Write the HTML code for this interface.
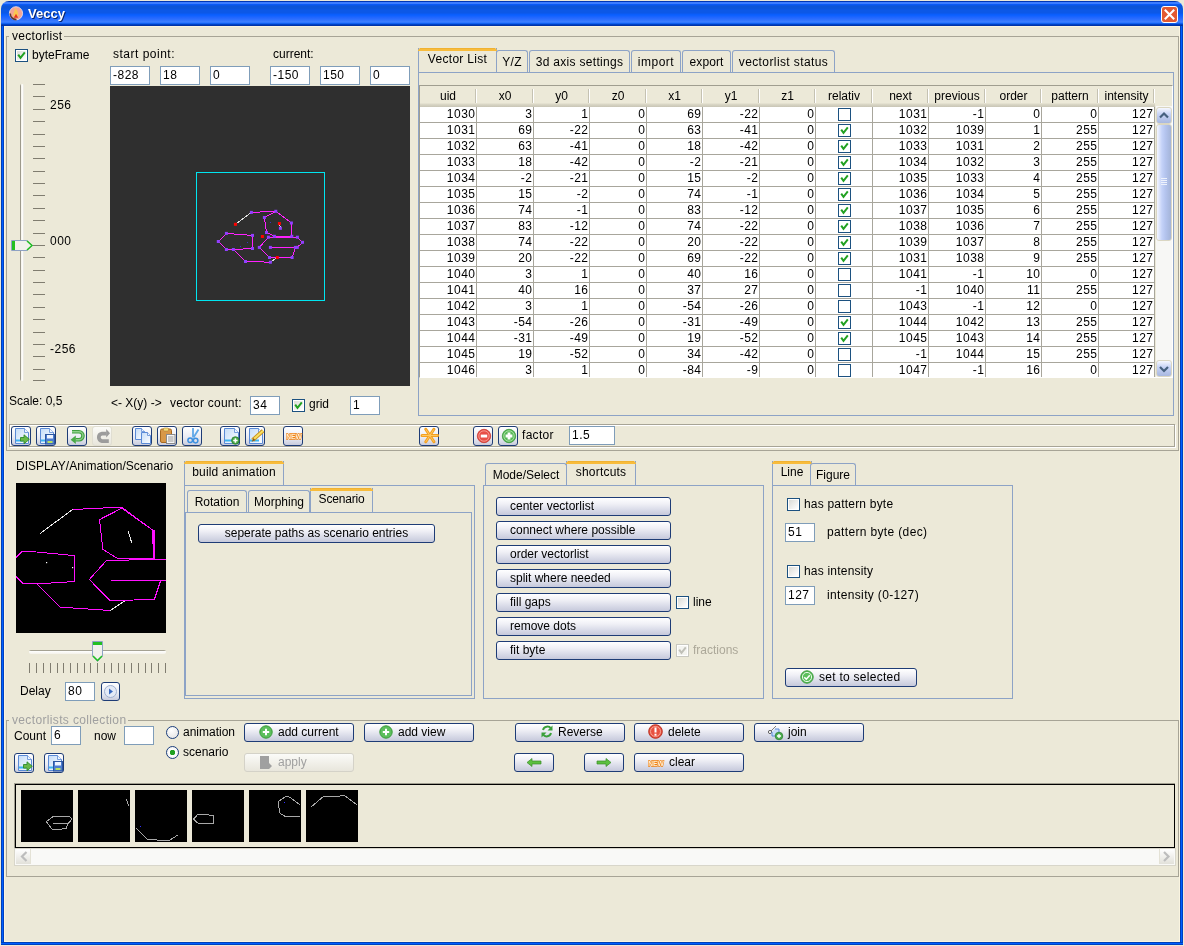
<!DOCTYPE html><html><head><meta charset="utf-8"><style>
*{margin:0;padding:0;box-sizing:border-box}
html,body{width:1184px;height:946px;overflow:hidden;background:#ECE9D8;font-family:"Liberation Sans",sans-serif;font-size:12px;color:#000}
div,span{position:absolute}
.t{white-space:nowrap;line-height:14px}
.tf{background:#fff;border:1px solid #7F9DB9;white-space:nowrap;line-height:16px;padding-left:2px;letter-spacing:0.5px}
.btn{border:1px solid #1E3C76;border-radius:3px;background:linear-gradient(#FFFFFF,#F0F0F6 35%,#D9DBE8 70%,#C6C9DB);white-space:nowrap;line-height:16px}
.cb{background:linear-gradient(135deg,#DCDCD7 10%,#FFFFFF 90%);border:1px solid #1C5180;box-shadow:inset 0 0 0 1px #fff}
.tab{border:1px solid #8DA3C6;border-bottom:none;border-radius:3px 3px 0 0;background:#ECE9D8;white-space:nowrap;text-align:center}
.tabsel{border-top:3px solid #F8B93C}
.pane{border:1px solid #8DA3C6}
.gl{background:#A7A496}
</style></head><body><div id="root" style="left:0;top:0;width:1184px;height:946px;will-change:transform;overflow:hidden">
<div style="left:0;top:0;width:1184px;height:946px;background:#ECE9D8"></div>
<div style="left:1px;top:1px;width:1182px;height:25px;border-radius:8px 8px 0 0;background:linear-gradient(#0036B5 0px,#0036B5 1px,#3C7DFF 1px,#3C7DFF 3px,#0A5EFF 3px,#0A58EE 4px,#0C55D8 5px,#0C55D8 7px,#0C58E6 9px,#0C58E6 12px,#0A5CF8 13px,#0A60FF 14px,#2468FF 17px,#3073FF 19px,#3F80FF 21px,#2070FF 22px,#0050E0 23px,#0033A8 24px,#0033A8 25px)"></div>
<div style="left:1px;top:26px;width:3px;height:919px;background:linear-gradient(90deg,#0040B8 0,#0040B8 1px,#0060FF 1px,#0060FF 2px,#0040C0 2px)"></div>
<div style="left:1180px;top:26px;width:3px;height:919px;background:linear-gradient(90deg,#0040B8 0,#0040B8 1px,#0060FF 1px,#0060FF 2px,#0040C0 2px)"></div>
<div style="left:1px;top:942px;width:1182px;height:3px;background:linear-gradient(#0040B8 0,#0040B8 1px,#0060FF 1px,#0060FF 2px,#0040C0 2px)"></div>
<div style="left:4px;top:26px;width:1176px;height:1px;background:#FAF4E0"></div>
<div style="left:4px;top:26px;width:1px;height:916px;background:#FAF4E0"></div>
<div style="left:1179px;top:26px;width:1px;height:916px;background:#FAF4E0"></div>
<div style="left:4px;top:941px;width:1176px;height:1px;background:#FAF4E0"></div>
<svg style="position:absolute;left:8px;top:5px" width="16" height="16"><circle cx="8" cy="8.3" r="6.6" fill="#F2A595" stroke="#FBEAEA" stroke-width="0.8"/><path d="M2.2 8.5A6 6 0 0 0 8.5 14.6" stroke="#5A3A30" stroke-width="1.6" fill="none"/><path d="M7.6 2.8C9 5.5 10.6 7.5 10.2 11.2L5.2 11.2C5 8.5 6.6 6.5 7.6 2.8Z" fill="#F8C850"/><path d="M5.8 12.8L8 8.8L10.2 12.8Z" fill="#E83818"/></svg>
<div class="t" style="left:28px;top:6px;font-size:13px;font-weight:bold;color:#fff;line-height:16px;text-shadow:1px 1px 0 #0A246A">Veccy</div>
<div style="left:1161px;top:6px;width:17px;height:17px;border:1px solid #fff;border-radius:3px;background:#E35A32"></div>
<svg style="position:absolute;left:1161px;top:6px" width="17" height="17"><path d="M3.8 3.8L13.2 13.2M13.2 3.8L3.8 13.2" stroke="#fff" stroke-width="2.1"/></svg>
<div style="left:6px;top:36px;width:1173px;height:415px;border:1px solid #A7A496"></div>
<div class="t" style="left:9px;top:29px;padding:0 2px 0 3px;background:#ECE9D8;color:#000;letter-spacing:0.3px">vectorlist</div>
<div class="cb" style="left:15px;top:49px;width:13px;height:13px"></div>
<svg style="position:absolute;left:15px;top:49px" width="13" height="13"><path d="M3.2 5.6L5.5 8.8L9.8 3.4" stroke="#21A121" stroke-width="2" fill="none"/></svg>
<div class="t" style="left:32px;top:48px">byteFrame</div>
<div style="left:20px;top:84px;width:4px;height:297px;border-radius:2px;background:linear-gradient(90deg,#9D9A8C 0,#9D9A8C 1px,#F4F2EA 1px,#FFFFFF 3px,#DAD7C8 4px)"></div>
<div style="left:33px;top:84px;width:12px;height:1px;background:#807D70"></div>
<div style="left:33px;top:96px;width:12px;height:1px;background:#807D70"></div>
<div style="left:33px;top:109px;width:12px;height:1px;background:#807D70"></div>
<div style="left:33px;top:121px;width:12px;height:1px;background:#807D70"></div>
<div style="left:33px;top:134px;width:12px;height:1px;background:#807D70"></div>
<div style="left:33px;top:146px;width:12px;height:1px;background:#807D70"></div>
<div style="left:33px;top:158px;width:12px;height:1px;background:#807D70"></div>
<div style="left:33px;top:171px;width:12px;height:1px;background:#807D70"></div>
<div style="left:33px;top:183px;width:12px;height:1px;background:#807D70"></div>
<div style="left:33px;top:195px;width:12px;height:1px;background:#807D70"></div>
<div style="left:33px;top:208px;width:12px;height:1px;background:#807D70"></div>
<div style="left:33px;top:220px;width:12px;height:1px;background:#807D70"></div>
<div style="left:33px;top:233px;width:12px;height:1px;background:#807D70"></div>
<div style="left:33px;top:245px;width:12px;height:1px;background:#807D70"></div>
<div style="left:33px;top:257px;width:12px;height:1px;background:#807D70"></div>
<div style="left:33px;top:270px;width:12px;height:1px;background:#807D70"></div>
<div style="left:33px;top:282px;width:12px;height:1px;background:#807D70"></div>
<div style="left:33px;top:294px;width:12px;height:1px;background:#807D70"></div>
<div style="left:33px;top:307px;width:12px;height:1px;background:#807D70"></div>
<div style="left:33px;top:319px;width:12px;height:1px;background:#807D70"></div>
<div style="left:33px;top:332px;width:12px;height:1px;background:#807D70"></div>
<div style="left:33px;top:344px;width:12px;height:1px;background:#807D70"></div>
<div style="left:33px;top:356px;width:12px;height:1px;background:#807D70"></div>
<div style="left:33px;top:369px;width:12px;height:1px;background:#807D70"></div>
<div style="left:33px;top:380px;width:12px;height:1px;background:#807D70"></div>
<div class="t" style="left:50px;top:98px;letter-spacing:0.5px">256</div>
<div class="t" style="left:50px;top:234px;letter-spacing:0.5px">000</div>
<div class="t" style="left:50px;top:342px;letter-spacing:0.5px">-256</div>
<svg style="position:absolute;left:11px;top:240px" width="23" height="12"><path d="M0.5 0.5H16L21.5 5.5L16 10.5H0.5Z" fill="#F2F1EC" stroke="#8FA2C4"/><rect x="1" y="1" width="3" height="9" fill="#22C022"/><path d="M16 1L21 5.5L16 10" stroke="#22C022" stroke-width="1.5" fill="none"/></svg>
<div class="t" style="left:9px;top:394px">Scale: 0,5</div>
<div class="t" style="left:113px;top:47px;letter-spacing:0.5px">start point:</div>
<div class="t" style="left:273px;top:47px">current:</div>
<div class="tf" style="left:110px;top:66px;width:40px;height:19px">-828</div>
<div class="tf" style="left:160px;top:66px;width:40px;height:19px">18</div>
<div class="tf" style="left:210px;top:66px;width:40px;height:19px">0</div>
<div class="tf" style="left:270px;top:66px;width:40px;height:19px">-150</div>
<div class="tf" style="left:320px;top:66px;width:40px;height:19px">150</div>
<div class="tf" style="left:370px;top:66px;width:40px;height:19px">0</div>
<svg style="position:absolute;left:110px;top:86px" width="300" height="300">
<rect width="300" height="300" fill="#2F2F2F"/>
<rect x="86.5" y="86.5" width="128" height="128" fill="none" stroke="#00E5F0" stroke-width="1"/>
<g transform="translate(-110,-86)" fill="none" stroke-width="1" shape-rendering="crispEdges">
<polyline points="235.4,224.3 251.4,212.4" stroke="#E0E0E0"/>
<polyline points="251.4,212.4 275.8,211.3 291.4,223 291.8,236.3 274.4,236.3 266.5,232.5 264.4,217.5 275.8,211.3" stroke="#FF20FF"/>
<polyline points="279.4,223.5 280.4,228.3" stroke="#E0E0E0"/>
<polyline points="226.4,233.4 252.5,235.4 252.5,248.5 233.4,249.5 226.4,249.5 218.3,241.5 226.4,233.4" stroke="#FF20FF"/>
<polyline points="233.4,249.5 245.5,261.5 270.4,262.2" stroke="#FF20FF"/>
<polyline points="270.4,262.2 277.3,257.5" stroke="#E0E0E0"/>
<polyline points="269.5,257.5 292.1,257.5 295.4,247.4 270.4,247.4" stroke="#FF20FF"/>
<polyline points="269.5,257.5 259.3,247.4 268.4,237.2 297.4,237.2 302.5,242.3 297.3,247.4 295.4,247.4" stroke="#FF20FF"/>
</g>
<g transform="translate(-110,-86)" fill="#9040FF">
<rect x="249.9" y="210.9" width="3" height="3"/><rect x="274.3" y="209.8" width="3" height="3"/><rect x="289.9" y="221.5" width="3" height="3"/><rect x="290.3" y="234.8" width="3" height="3"/><rect x="272.9" y="234.8" width="3" height="3"/><rect x="265.0" y="231.0" width="3" height="3"/><rect x="262.9" y="216.0" width="3" height="3"/><rect x="278.9" y="226.8" width="3" height="3"/><rect x="224.9" y="231.9" width="3" height="3"/><rect x="251.0" y="233.9" width="3" height="3"/><rect x="251.0" y="247.0" width="3" height="3"/><rect x="231.9" y="248.0" width="3" height="3"/><rect x="224.9" y="248.0" width="3" height="3"/><rect x="216.8" y="240.0" width="3" height="3"/><rect x="244.0" y="260.0" width="3" height="3"/><rect x="268.9" y="260.7" width="3" height="3"/><rect x="268.0" y="256.0" width="3" height="3"/><rect x="290.6" y="256.0" width="3" height="3"/><rect x="293.9" y="245.9" width="3" height="3"/><rect x="295.8" y="245.9" width="3" height="3"/><rect x="268.9" y="245.9" width="3" height="3"/><rect x="257.8" y="245.9" width="3" height="3"/><rect x="266.9" y="235.7" width="3" height="3"/><rect x="295.9" y="235.7" width="3" height="3"/><rect x="301.0" y="240.8" width="3" height="3"/>
</g>
<g transform="translate(-110,-86)" fill="#3838C0"><rect x="270" y="222" width="1" height="1"/><rect x="247" y="242" width="1" height="1"/><rect x="240" y="246" width="1" height="1"/></g>
<g transform="translate(-110,-86)" fill="#FF0000">
<rect x="233.9" y="222.8" width="3" height="3"/><rect x="277.9" y="222.0" width="3" height="3"/><rect x="260.9" y="235.0" width="3" height="3"/><rect x="275.8" y="256.0" width="3" height="3"/>
</g>
</svg>
<div class="t" style="left:111px;top:396px">&lt;- X(y) -&gt;</div>
<div class="t" style="left:170px;top:396px;letter-spacing:0.25px">vector count:</div>
<div class="tf" style="left:250px;top:396px;width:30px;height:19px">34</div>
<div class="cb" style="left:292px;top:399px;width:13px;height:13px"></div>
<svg style="position:absolute;left:292px;top:399px" width="13" height="13"><path d="M3.2 5.6L5.5 8.8L9.8 3.4" stroke="#21A121" stroke-width="2" fill="none"/></svg>
<div class="t" style="left:309px;top:397px">grid</div>
<div class="tf" style="left:350px;top:396px;width:30px;height:19px">1</div>
<div class="pane" style="left:418px;top:72px;width:756px;height:344px"></div>
<div style="left:418px;top:48px;width:79px;height:24px;border-left:1px solid #8DA3C6;border-right:1px solid #8DA3C6;background:#ECE9D8"></div>
<div style="left:418px;top:48px;width:79px;height:3px;background:linear-gradient(#E8A828,#F8BC3C 1px);clip-path:polygon(2px 0,calc(100% - 2px) 0,100% 2px,100% 100%,0 100%,0 2px)"></div>
<div class="t" style="left:418px;top:52px;width:79px;text-align:center;letter-spacing:0.3px">Vector List</div>
<div class="tab" style="left:496px;top:50px;width:32px;height:22px"></div>
<div class="t" style="left:496px;top:55px;width:32px;text-align:center;letter-spacing:0.3px">Y/Z</div>
<div class="tab" style="left:529px;top:50px;width:101px;height:22px"></div>
<div class="t" style="left:529px;top:55px;width:101px;text-align:center;letter-spacing:0.3px">3d axis settings</div>
<div class="tab" style="left:631px;top:50px;width:50px;height:22px"></div>
<div class="t" style="left:631px;top:55px;width:50px;text-align:center;letter-spacing:0.5px">import</div>
<div class="tab" style="left:682px;top:50px;width:49px;height:22px"></div>
<div class="t" style="left:682px;top:55px;width:49px;text-align:center;letter-spacing:0.1px">export</div>
<div class="tab" style="left:732px;top:50px;width:103px;height:22px"></div>
<div class="t" style="left:732px;top:55px;width:103px;text-align:center;letter-spacing:0.4px">vectorlist status</div>
<div style="left:419px;top:85px;width:754px;height:293px;border-top:1px solid #A09E90;border-left:1px solid #A09E90;border-right:1px solid #fff;border-bottom:1px solid #fff;background:#ECE9D8"></div>
<div style="left:420px;top:86px;width:735px;height:291px;overflow:hidden">
<div style="left:0;top:0;width:735px;height:21px;background:linear-gradient(#ECE9D8 0,#ECE9D8 17px,#DCD9C8 18px,#C8C5B5 21px)"></div>
<div class="t" style="left:0px;top:3px;width:56px;text-align:center">uid</div>
<div style="left:55px;top:3px;width:1px;height:14px;background:#C5C2B2"></div>
<div style="left:56px;top:3px;width:1px;height:14px;background:#FFFFFF"></div>
<div class="t" style="left:57px;top:3px;width:56px;text-align:center">x0</div>
<div style="left:112px;top:3px;width:1px;height:14px;background:#C5C2B2"></div>
<div style="left:113px;top:3px;width:1px;height:14px;background:#FFFFFF"></div>
<div class="t" style="left:114px;top:3px;width:55px;text-align:center">y0</div>
<div style="left:168px;top:3px;width:1px;height:14px;background:#C5C2B2"></div>
<div style="left:169px;top:3px;width:1px;height:14px;background:#FFFFFF"></div>
<div class="t" style="left:170px;top:3px;width:56px;text-align:center">z0</div>
<div style="left:225px;top:3px;width:1px;height:14px;background:#C5C2B2"></div>
<div style="left:226px;top:3px;width:1px;height:14px;background:#FFFFFF"></div>
<div class="t" style="left:227px;top:3px;width:55px;text-align:center">x1</div>
<div style="left:281px;top:3px;width:1px;height:14px;background:#C5C2B2"></div>
<div style="left:282px;top:3px;width:1px;height:14px;background:#FFFFFF"></div>
<div class="t" style="left:283px;top:3px;width:56px;text-align:center">y1</div>
<div style="left:338px;top:3px;width:1px;height:14px;background:#C5C2B2"></div>
<div style="left:339px;top:3px;width:1px;height:14px;background:#FFFFFF"></div>
<div class="t" style="left:340px;top:3px;width:55px;text-align:center">z1</div>
<div style="left:394px;top:3px;width:1px;height:14px;background:#C5C2B2"></div>
<div style="left:395px;top:3px;width:1px;height:14px;background:#FFFFFF"></div>
<div class="t" style="left:396px;top:3px;width:56px;text-align:center">relativ</div>
<div style="left:451px;top:3px;width:1px;height:14px;background:#C5C2B2"></div>
<div style="left:452px;top:3px;width:1px;height:14px;background:#FFFFFF"></div>
<div class="t" style="left:453px;top:3px;width:55px;text-align:center">next</div>
<div style="left:507px;top:3px;width:1px;height:14px;background:#C5C2B2"></div>
<div style="left:508px;top:3px;width:1px;height:14px;background:#FFFFFF"></div>
<div class="t" style="left:509px;top:3px;width:56px;text-align:center">previous</div>
<div style="left:564px;top:3px;width:1px;height:14px;background:#C5C2B2"></div>
<div style="left:565px;top:3px;width:1px;height:14px;background:#FFFFFF"></div>
<div class="t" style="left:566px;top:3px;width:55px;text-align:center">order</div>
<div style="left:620px;top:3px;width:1px;height:14px;background:#C5C2B2"></div>
<div style="left:621px;top:3px;width:1px;height:14px;background:#FFFFFF"></div>
<div class="t" style="left:622px;top:3px;width:56px;text-align:center">pattern</div>
<div style="left:677px;top:3px;width:1px;height:14px;background:#C5C2B2"></div>
<div style="left:678px;top:3px;width:1px;height:14px;background:#FFFFFF"></div>
<div class="t" style="left:679px;top:3px;width:55px;text-align:center">intensity</div>
<div style="left:733px;top:3px;width:1px;height:14px;background:#C5C2B2"></div>
<div style="left:734px;top:3px;width:1px;height:14px;background:#FFFFFF"></div>
<div style="left:0;top:21px;width:735px;height:270px;background:#fff"></div>
<div style="left:0;top:36px;width:735px;height:1px;background:#A8A69C"></div>
<div class="t" style="left:0px;top:21px;width:55.5px;text-align:right;letter-spacing:0.5px">1030</div>
<div class="t" style="left:57px;top:21px;width:55.5px;text-align:right;letter-spacing:0.5px">3</div>
<div class="t" style="left:114px;top:21px;width:54.5px;text-align:right;letter-spacing:0.5px">1</div>
<div class="t" style="left:170px;top:21px;width:55.5px;text-align:right;letter-spacing:0.5px">0</div>
<div class="t" style="left:227px;top:21px;width:54.5px;text-align:right;letter-spacing:0.5px">69</div>
<div class="t" style="left:283px;top:21px;width:55.5px;text-align:right;letter-spacing:0.5px">-22</div>
<div class="t" style="left:340px;top:21px;width:54.5px;text-align:right;letter-spacing:0.5px">0</div>
<div class="cb" style="left:418px;top:22px;width:13px;height:13px;background:#fff;box-shadow:none"></div>
<div class="t" style="left:453px;top:21px;width:54.5px;text-align:right;letter-spacing:0.5px">1031</div>
<div class="t" style="left:509px;top:21px;width:55.5px;text-align:right;letter-spacing:0.5px">-1</div>
<div class="t" style="left:566px;top:21px;width:54.5px;text-align:right;letter-spacing:0.5px">0</div>
<div class="t" style="left:622px;top:21px;width:55.5px;text-align:right;letter-spacing:0.5px">0</div>
<div class="t" style="left:679px;top:21px;width:54.5px;text-align:right;letter-spacing:0.5px">127</div>
<div style="left:0;top:52px;width:735px;height:1px;background:#A8A69C"></div>
<div class="t" style="left:0px;top:37px;width:55.5px;text-align:right;letter-spacing:0.5px">1031</div>
<div class="t" style="left:57px;top:37px;width:55.5px;text-align:right;letter-spacing:0.5px">69</div>
<div class="t" style="left:114px;top:37px;width:54.5px;text-align:right;letter-spacing:0.5px">-22</div>
<div class="t" style="left:170px;top:37px;width:55.5px;text-align:right;letter-spacing:0.5px">0</div>
<div class="t" style="left:227px;top:37px;width:54.5px;text-align:right;letter-spacing:0.5px">63</div>
<div class="t" style="left:283px;top:37px;width:55.5px;text-align:right;letter-spacing:0.5px">-41</div>
<div class="t" style="left:340px;top:37px;width:54.5px;text-align:right;letter-spacing:0.5px">0</div>
<div class="cb" style="left:418px;top:38px;width:13px;height:13px;background:#fff;box-shadow:none"></div>
<svg style="position:absolute;left:418px;top:38px" width="13" height="13"><path d="M3.2 5.6L5.5 8.8L9.8 3.4" stroke="#21A121" stroke-width="2" fill="none"/></svg>
<div class="t" style="left:453px;top:37px;width:54.5px;text-align:right;letter-spacing:0.5px">1032</div>
<div class="t" style="left:509px;top:37px;width:55.5px;text-align:right;letter-spacing:0.5px">1039</div>
<div class="t" style="left:566px;top:37px;width:54.5px;text-align:right;letter-spacing:0.5px">1</div>
<div class="t" style="left:622px;top:37px;width:55.5px;text-align:right;letter-spacing:0.5px">255</div>
<div class="t" style="left:679px;top:37px;width:54.5px;text-align:right;letter-spacing:0.5px">127</div>
<div style="left:0;top:68px;width:735px;height:1px;background:#A8A69C"></div>
<div class="t" style="left:0px;top:53px;width:55.5px;text-align:right;letter-spacing:0.5px">1032</div>
<div class="t" style="left:57px;top:53px;width:55.5px;text-align:right;letter-spacing:0.5px">63</div>
<div class="t" style="left:114px;top:53px;width:54.5px;text-align:right;letter-spacing:0.5px">-41</div>
<div class="t" style="left:170px;top:53px;width:55.5px;text-align:right;letter-spacing:0.5px">0</div>
<div class="t" style="left:227px;top:53px;width:54.5px;text-align:right;letter-spacing:0.5px">18</div>
<div class="t" style="left:283px;top:53px;width:55.5px;text-align:right;letter-spacing:0.5px">-42</div>
<div class="t" style="left:340px;top:53px;width:54.5px;text-align:right;letter-spacing:0.5px">0</div>
<div class="cb" style="left:418px;top:54px;width:13px;height:13px;background:#fff;box-shadow:none"></div>
<svg style="position:absolute;left:418px;top:54px" width="13" height="13"><path d="M3.2 5.6L5.5 8.8L9.8 3.4" stroke="#21A121" stroke-width="2" fill="none"/></svg>
<div class="t" style="left:453px;top:53px;width:54.5px;text-align:right;letter-spacing:0.5px">1033</div>
<div class="t" style="left:509px;top:53px;width:55.5px;text-align:right;letter-spacing:0.5px">1031</div>
<div class="t" style="left:566px;top:53px;width:54.5px;text-align:right;letter-spacing:0.5px">2</div>
<div class="t" style="left:622px;top:53px;width:55.5px;text-align:right;letter-spacing:0.5px">255</div>
<div class="t" style="left:679px;top:53px;width:54.5px;text-align:right;letter-spacing:0.5px">127</div>
<div style="left:0;top:84px;width:735px;height:1px;background:#A8A69C"></div>
<div class="t" style="left:0px;top:69px;width:55.5px;text-align:right;letter-spacing:0.5px">1033</div>
<div class="t" style="left:57px;top:69px;width:55.5px;text-align:right;letter-spacing:0.5px">18</div>
<div class="t" style="left:114px;top:69px;width:54.5px;text-align:right;letter-spacing:0.5px">-42</div>
<div class="t" style="left:170px;top:69px;width:55.5px;text-align:right;letter-spacing:0.5px">0</div>
<div class="t" style="left:227px;top:69px;width:54.5px;text-align:right;letter-spacing:0.5px">-2</div>
<div class="t" style="left:283px;top:69px;width:55.5px;text-align:right;letter-spacing:0.5px">-21</div>
<div class="t" style="left:340px;top:69px;width:54.5px;text-align:right;letter-spacing:0.5px">0</div>
<div class="cb" style="left:418px;top:70px;width:13px;height:13px;background:#fff;box-shadow:none"></div>
<svg style="position:absolute;left:418px;top:70px" width="13" height="13"><path d="M3.2 5.6L5.5 8.8L9.8 3.4" stroke="#21A121" stroke-width="2" fill="none"/></svg>
<div class="t" style="left:453px;top:69px;width:54.5px;text-align:right;letter-spacing:0.5px">1034</div>
<div class="t" style="left:509px;top:69px;width:55.5px;text-align:right;letter-spacing:0.5px">1032</div>
<div class="t" style="left:566px;top:69px;width:54.5px;text-align:right;letter-spacing:0.5px">3</div>
<div class="t" style="left:622px;top:69px;width:55.5px;text-align:right;letter-spacing:0.5px">255</div>
<div class="t" style="left:679px;top:69px;width:54.5px;text-align:right;letter-spacing:0.5px">127</div>
<div style="left:0;top:100px;width:735px;height:1px;background:#A8A69C"></div>
<div class="t" style="left:0px;top:85px;width:55.5px;text-align:right;letter-spacing:0.5px">1034</div>
<div class="t" style="left:57px;top:85px;width:55.5px;text-align:right;letter-spacing:0.5px">-2</div>
<div class="t" style="left:114px;top:85px;width:54.5px;text-align:right;letter-spacing:0.5px">-21</div>
<div class="t" style="left:170px;top:85px;width:55.5px;text-align:right;letter-spacing:0.5px">0</div>
<div class="t" style="left:227px;top:85px;width:54.5px;text-align:right;letter-spacing:0.5px">15</div>
<div class="t" style="left:283px;top:85px;width:55.5px;text-align:right;letter-spacing:0.5px">-2</div>
<div class="t" style="left:340px;top:85px;width:54.5px;text-align:right;letter-spacing:0.5px">0</div>
<div class="cb" style="left:418px;top:86px;width:13px;height:13px;background:#fff;box-shadow:none"></div>
<svg style="position:absolute;left:418px;top:86px" width="13" height="13"><path d="M3.2 5.6L5.5 8.8L9.8 3.4" stroke="#21A121" stroke-width="2" fill="none"/></svg>
<div class="t" style="left:453px;top:85px;width:54.5px;text-align:right;letter-spacing:0.5px">1035</div>
<div class="t" style="left:509px;top:85px;width:55.5px;text-align:right;letter-spacing:0.5px">1033</div>
<div class="t" style="left:566px;top:85px;width:54.5px;text-align:right;letter-spacing:0.5px">4</div>
<div class="t" style="left:622px;top:85px;width:55.5px;text-align:right;letter-spacing:0.5px">255</div>
<div class="t" style="left:679px;top:85px;width:54.5px;text-align:right;letter-spacing:0.5px">127</div>
<div style="left:0;top:116px;width:735px;height:1px;background:#A8A69C"></div>
<div class="t" style="left:0px;top:101px;width:55.5px;text-align:right;letter-spacing:0.5px">1035</div>
<div class="t" style="left:57px;top:101px;width:55.5px;text-align:right;letter-spacing:0.5px">15</div>
<div class="t" style="left:114px;top:101px;width:54.5px;text-align:right;letter-spacing:0.5px">-2</div>
<div class="t" style="left:170px;top:101px;width:55.5px;text-align:right;letter-spacing:0.5px">0</div>
<div class="t" style="left:227px;top:101px;width:54.5px;text-align:right;letter-spacing:0.5px">74</div>
<div class="t" style="left:283px;top:101px;width:55.5px;text-align:right;letter-spacing:0.5px">-1</div>
<div class="t" style="left:340px;top:101px;width:54.5px;text-align:right;letter-spacing:0.5px">0</div>
<div class="cb" style="left:418px;top:102px;width:13px;height:13px;background:#fff;box-shadow:none"></div>
<svg style="position:absolute;left:418px;top:102px" width="13" height="13"><path d="M3.2 5.6L5.5 8.8L9.8 3.4" stroke="#21A121" stroke-width="2" fill="none"/></svg>
<div class="t" style="left:453px;top:101px;width:54.5px;text-align:right;letter-spacing:0.5px">1036</div>
<div class="t" style="left:509px;top:101px;width:55.5px;text-align:right;letter-spacing:0.5px">1034</div>
<div class="t" style="left:566px;top:101px;width:54.5px;text-align:right;letter-spacing:0.5px">5</div>
<div class="t" style="left:622px;top:101px;width:55.5px;text-align:right;letter-spacing:0.5px">255</div>
<div class="t" style="left:679px;top:101px;width:54.5px;text-align:right;letter-spacing:0.5px">127</div>
<div style="left:0;top:132px;width:735px;height:1px;background:#A8A69C"></div>
<div class="t" style="left:0px;top:117px;width:55.5px;text-align:right;letter-spacing:0.5px">1036</div>
<div class="t" style="left:57px;top:117px;width:55.5px;text-align:right;letter-spacing:0.5px">74</div>
<div class="t" style="left:114px;top:117px;width:54.5px;text-align:right;letter-spacing:0.5px">-1</div>
<div class="t" style="left:170px;top:117px;width:55.5px;text-align:right;letter-spacing:0.5px">0</div>
<div class="t" style="left:227px;top:117px;width:54.5px;text-align:right;letter-spacing:0.5px">83</div>
<div class="t" style="left:283px;top:117px;width:55.5px;text-align:right;letter-spacing:0.5px">-12</div>
<div class="t" style="left:340px;top:117px;width:54.5px;text-align:right;letter-spacing:0.5px">0</div>
<div class="cb" style="left:418px;top:118px;width:13px;height:13px;background:#fff;box-shadow:none"></div>
<svg style="position:absolute;left:418px;top:118px" width="13" height="13"><path d="M3.2 5.6L5.5 8.8L9.8 3.4" stroke="#21A121" stroke-width="2" fill="none"/></svg>
<div class="t" style="left:453px;top:117px;width:54.5px;text-align:right;letter-spacing:0.5px">1037</div>
<div class="t" style="left:509px;top:117px;width:55.5px;text-align:right;letter-spacing:0.5px">1035</div>
<div class="t" style="left:566px;top:117px;width:54.5px;text-align:right;letter-spacing:0.5px">6</div>
<div class="t" style="left:622px;top:117px;width:55.5px;text-align:right;letter-spacing:0.5px">255</div>
<div class="t" style="left:679px;top:117px;width:54.5px;text-align:right;letter-spacing:0.5px">127</div>
<div style="left:0;top:148px;width:735px;height:1px;background:#A8A69C"></div>
<div class="t" style="left:0px;top:133px;width:55.5px;text-align:right;letter-spacing:0.5px">1037</div>
<div class="t" style="left:57px;top:133px;width:55.5px;text-align:right;letter-spacing:0.5px">83</div>
<div class="t" style="left:114px;top:133px;width:54.5px;text-align:right;letter-spacing:0.5px">-12</div>
<div class="t" style="left:170px;top:133px;width:55.5px;text-align:right;letter-spacing:0.5px">0</div>
<div class="t" style="left:227px;top:133px;width:54.5px;text-align:right;letter-spacing:0.5px">74</div>
<div class="t" style="left:283px;top:133px;width:55.5px;text-align:right;letter-spacing:0.5px">-22</div>
<div class="t" style="left:340px;top:133px;width:54.5px;text-align:right;letter-spacing:0.5px">0</div>
<div class="cb" style="left:418px;top:134px;width:13px;height:13px;background:#fff;box-shadow:none"></div>
<svg style="position:absolute;left:418px;top:134px" width="13" height="13"><path d="M3.2 5.6L5.5 8.8L9.8 3.4" stroke="#21A121" stroke-width="2" fill="none"/></svg>
<div class="t" style="left:453px;top:133px;width:54.5px;text-align:right;letter-spacing:0.5px">1038</div>
<div class="t" style="left:509px;top:133px;width:55.5px;text-align:right;letter-spacing:0.5px">1036</div>
<div class="t" style="left:566px;top:133px;width:54.5px;text-align:right;letter-spacing:0.5px">7</div>
<div class="t" style="left:622px;top:133px;width:55.5px;text-align:right;letter-spacing:0.5px">255</div>
<div class="t" style="left:679px;top:133px;width:54.5px;text-align:right;letter-spacing:0.5px">127</div>
<div style="left:0;top:164px;width:735px;height:1px;background:#A8A69C"></div>
<div class="t" style="left:0px;top:149px;width:55.5px;text-align:right;letter-spacing:0.5px">1038</div>
<div class="t" style="left:57px;top:149px;width:55.5px;text-align:right;letter-spacing:0.5px">74</div>
<div class="t" style="left:114px;top:149px;width:54.5px;text-align:right;letter-spacing:0.5px">-22</div>
<div class="t" style="left:170px;top:149px;width:55.5px;text-align:right;letter-spacing:0.5px">0</div>
<div class="t" style="left:227px;top:149px;width:54.5px;text-align:right;letter-spacing:0.5px">20</div>
<div class="t" style="left:283px;top:149px;width:55.5px;text-align:right;letter-spacing:0.5px">-22</div>
<div class="t" style="left:340px;top:149px;width:54.5px;text-align:right;letter-spacing:0.5px">0</div>
<div class="cb" style="left:418px;top:150px;width:13px;height:13px;background:#fff;box-shadow:none"></div>
<svg style="position:absolute;left:418px;top:150px" width="13" height="13"><path d="M3.2 5.6L5.5 8.8L9.8 3.4" stroke="#21A121" stroke-width="2" fill="none"/></svg>
<div class="t" style="left:453px;top:149px;width:54.5px;text-align:right;letter-spacing:0.5px">1039</div>
<div class="t" style="left:509px;top:149px;width:55.5px;text-align:right;letter-spacing:0.5px">1037</div>
<div class="t" style="left:566px;top:149px;width:54.5px;text-align:right;letter-spacing:0.5px">8</div>
<div class="t" style="left:622px;top:149px;width:55.5px;text-align:right;letter-spacing:0.5px">255</div>
<div class="t" style="left:679px;top:149px;width:54.5px;text-align:right;letter-spacing:0.5px">127</div>
<div style="left:0;top:180px;width:735px;height:1px;background:#A8A69C"></div>
<div class="t" style="left:0px;top:165px;width:55.5px;text-align:right;letter-spacing:0.5px">1039</div>
<div class="t" style="left:57px;top:165px;width:55.5px;text-align:right;letter-spacing:0.5px">20</div>
<div class="t" style="left:114px;top:165px;width:54.5px;text-align:right;letter-spacing:0.5px">-22</div>
<div class="t" style="left:170px;top:165px;width:55.5px;text-align:right;letter-spacing:0.5px">0</div>
<div class="t" style="left:227px;top:165px;width:54.5px;text-align:right;letter-spacing:0.5px">69</div>
<div class="t" style="left:283px;top:165px;width:55.5px;text-align:right;letter-spacing:0.5px">-22</div>
<div class="t" style="left:340px;top:165px;width:54.5px;text-align:right;letter-spacing:0.5px">0</div>
<div class="cb" style="left:418px;top:166px;width:13px;height:13px;background:#fff;box-shadow:none"></div>
<svg style="position:absolute;left:418px;top:166px" width="13" height="13"><path d="M3.2 5.6L5.5 8.8L9.8 3.4" stroke="#21A121" stroke-width="2" fill="none"/></svg>
<div class="t" style="left:453px;top:165px;width:54.5px;text-align:right;letter-spacing:0.5px">1031</div>
<div class="t" style="left:509px;top:165px;width:55.5px;text-align:right;letter-spacing:0.5px">1038</div>
<div class="t" style="left:566px;top:165px;width:54.5px;text-align:right;letter-spacing:0.5px">9</div>
<div class="t" style="left:622px;top:165px;width:55.5px;text-align:right;letter-spacing:0.5px">255</div>
<div class="t" style="left:679px;top:165px;width:54.5px;text-align:right;letter-spacing:0.5px">127</div>
<div style="left:0;top:196px;width:735px;height:1px;background:#A8A69C"></div>
<div class="t" style="left:0px;top:181px;width:55.5px;text-align:right;letter-spacing:0.5px">1040</div>
<div class="t" style="left:57px;top:181px;width:55.5px;text-align:right;letter-spacing:0.5px">3</div>
<div class="t" style="left:114px;top:181px;width:54.5px;text-align:right;letter-spacing:0.5px">1</div>
<div class="t" style="left:170px;top:181px;width:55.5px;text-align:right;letter-spacing:0.5px">0</div>
<div class="t" style="left:227px;top:181px;width:54.5px;text-align:right;letter-spacing:0.5px">40</div>
<div class="t" style="left:283px;top:181px;width:55.5px;text-align:right;letter-spacing:0.5px">16</div>
<div class="t" style="left:340px;top:181px;width:54.5px;text-align:right;letter-spacing:0.5px">0</div>
<div class="cb" style="left:418px;top:182px;width:13px;height:13px;background:#fff;box-shadow:none"></div>
<div class="t" style="left:453px;top:181px;width:54.5px;text-align:right;letter-spacing:0.5px">1041</div>
<div class="t" style="left:509px;top:181px;width:55.5px;text-align:right;letter-spacing:0.5px">-1</div>
<div class="t" style="left:566px;top:181px;width:54.5px;text-align:right;letter-spacing:0.5px">10</div>
<div class="t" style="left:622px;top:181px;width:55.5px;text-align:right;letter-spacing:0.5px">0</div>
<div class="t" style="left:679px;top:181px;width:54.5px;text-align:right;letter-spacing:0.5px">127</div>
<div style="left:0;top:212px;width:735px;height:1px;background:#A8A69C"></div>
<div class="t" style="left:0px;top:197px;width:55.5px;text-align:right;letter-spacing:0.5px">1041</div>
<div class="t" style="left:57px;top:197px;width:55.5px;text-align:right;letter-spacing:0.5px">40</div>
<div class="t" style="left:114px;top:197px;width:54.5px;text-align:right;letter-spacing:0.5px">16</div>
<div class="t" style="left:170px;top:197px;width:55.5px;text-align:right;letter-spacing:0.5px">0</div>
<div class="t" style="left:227px;top:197px;width:54.5px;text-align:right;letter-spacing:0.5px">37</div>
<div class="t" style="left:283px;top:197px;width:55.5px;text-align:right;letter-spacing:0.5px">27</div>
<div class="t" style="left:340px;top:197px;width:54.5px;text-align:right;letter-spacing:0.5px">0</div>
<div class="cb" style="left:418px;top:198px;width:13px;height:13px;background:#fff;box-shadow:none"></div>
<div class="t" style="left:453px;top:197px;width:54.5px;text-align:right;letter-spacing:0.5px">-1</div>
<div class="t" style="left:509px;top:197px;width:55.5px;text-align:right;letter-spacing:0.5px">1040</div>
<div class="t" style="left:566px;top:197px;width:54.5px;text-align:right;letter-spacing:0.5px">11</div>
<div class="t" style="left:622px;top:197px;width:55.5px;text-align:right;letter-spacing:0.5px">255</div>
<div class="t" style="left:679px;top:197px;width:54.5px;text-align:right;letter-spacing:0.5px">127</div>
<div style="left:0;top:228px;width:735px;height:1px;background:#A8A69C"></div>
<div class="t" style="left:0px;top:213px;width:55.5px;text-align:right;letter-spacing:0.5px">1042</div>
<div class="t" style="left:57px;top:213px;width:55.5px;text-align:right;letter-spacing:0.5px">3</div>
<div class="t" style="left:114px;top:213px;width:54.5px;text-align:right;letter-spacing:0.5px">1</div>
<div class="t" style="left:170px;top:213px;width:55.5px;text-align:right;letter-spacing:0.5px">0</div>
<div class="t" style="left:227px;top:213px;width:54.5px;text-align:right;letter-spacing:0.5px">-54</div>
<div class="t" style="left:283px;top:213px;width:55.5px;text-align:right;letter-spacing:0.5px">-26</div>
<div class="t" style="left:340px;top:213px;width:54.5px;text-align:right;letter-spacing:0.5px">0</div>
<div class="cb" style="left:418px;top:214px;width:13px;height:13px;background:#fff;box-shadow:none"></div>
<div class="t" style="left:453px;top:213px;width:54.5px;text-align:right;letter-spacing:0.5px">1043</div>
<div class="t" style="left:509px;top:213px;width:55.5px;text-align:right;letter-spacing:0.5px">-1</div>
<div class="t" style="left:566px;top:213px;width:54.5px;text-align:right;letter-spacing:0.5px">12</div>
<div class="t" style="left:622px;top:213px;width:55.5px;text-align:right;letter-spacing:0.5px">0</div>
<div class="t" style="left:679px;top:213px;width:54.5px;text-align:right;letter-spacing:0.5px">127</div>
<div style="left:0;top:244px;width:735px;height:1px;background:#A8A69C"></div>
<div class="t" style="left:0px;top:229px;width:55.5px;text-align:right;letter-spacing:0.5px">1043</div>
<div class="t" style="left:57px;top:229px;width:55.5px;text-align:right;letter-spacing:0.5px">-54</div>
<div class="t" style="left:114px;top:229px;width:54.5px;text-align:right;letter-spacing:0.5px">-26</div>
<div class="t" style="left:170px;top:229px;width:55.5px;text-align:right;letter-spacing:0.5px">0</div>
<div class="t" style="left:227px;top:229px;width:54.5px;text-align:right;letter-spacing:0.5px">-31</div>
<div class="t" style="left:283px;top:229px;width:55.5px;text-align:right;letter-spacing:0.5px">-49</div>
<div class="t" style="left:340px;top:229px;width:54.5px;text-align:right;letter-spacing:0.5px">0</div>
<div class="cb" style="left:418px;top:230px;width:13px;height:13px;background:#fff;box-shadow:none"></div>
<svg style="position:absolute;left:418px;top:230px" width="13" height="13"><path d="M3.2 5.6L5.5 8.8L9.8 3.4" stroke="#21A121" stroke-width="2" fill="none"/></svg>
<div class="t" style="left:453px;top:229px;width:54.5px;text-align:right;letter-spacing:0.5px">1044</div>
<div class="t" style="left:509px;top:229px;width:55.5px;text-align:right;letter-spacing:0.5px">1042</div>
<div class="t" style="left:566px;top:229px;width:54.5px;text-align:right;letter-spacing:0.5px">13</div>
<div class="t" style="left:622px;top:229px;width:55.5px;text-align:right;letter-spacing:0.5px">255</div>
<div class="t" style="left:679px;top:229px;width:54.5px;text-align:right;letter-spacing:0.5px">127</div>
<div style="left:0;top:260px;width:735px;height:1px;background:#A8A69C"></div>
<div class="t" style="left:0px;top:245px;width:55.5px;text-align:right;letter-spacing:0.5px">1044</div>
<div class="t" style="left:57px;top:245px;width:55.5px;text-align:right;letter-spacing:0.5px">-31</div>
<div class="t" style="left:114px;top:245px;width:54.5px;text-align:right;letter-spacing:0.5px">-49</div>
<div class="t" style="left:170px;top:245px;width:55.5px;text-align:right;letter-spacing:0.5px">0</div>
<div class="t" style="left:227px;top:245px;width:54.5px;text-align:right;letter-spacing:0.5px">19</div>
<div class="t" style="left:283px;top:245px;width:55.5px;text-align:right;letter-spacing:0.5px">-52</div>
<div class="t" style="left:340px;top:245px;width:54.5px;text-align:right;letter-spacing:0.5px">0</div>
<div class="cb" style="left:418px;top:246px;width:13px;height:13px;background:#fff;box-shadow:none"></div>
<svg style="position:absolute;left:418px;top:246px" width="13" height="13"><path d="M3.2 5.6L5.5 8.8L9.8 3.4" stroke="#21A121" stroke-width="2" fill="none"/></svg>
<div class="t" style="left:453px;top:245px;width:54.5px;text-align:right;letter-spacing:0.5px">1045</div>
<div class="t" style="left:509px;top:245px;width:55.5px;text-align:right;letter-spacing:0.5px">1043</div>
<div class="t" style="left:566px;top:245px;width:54.5px;text-align:right;letter-spacing:0.5px">14</div>
<div class="t" style="left:622px;top:245px;width:55.5px;text-align:right;letter-spacing:0.5px">255</div>
<div class="t" style="left:679px;top:245px;width:54.5px;text-align:right;letter-spacing:0.5px">127</div>
<div style="left:0;top:276px;width:735px;height:1px;background:#A8A69C"></div>
<div class="t" style="left:0px;top:261px;width:55.5px;text-align:right;letter-spacing:0.5px">1045</div>
<div class="t" style="left:57px;top:261px;width:55.5px;text-align:right;letter-spacing:0.5px">19</div>
<div class="t" style="left:114px;top:261px;width:54.5px;text-align:right;letter-spacing:0.5px">-52</div>
<div class="t" style="left:170px;top:261px;width:55.5px;text-align:right;letter-spacing:0.5px">0</div>
<div class="t" style="left:227px;top:261px;width:54.5px;text-align:right;letter-spacing:0.5px">34</div>
<div class="t" style="left:283px;top:261px;width:55.5px;text-align:right;letter-spacing:0.5px">-42</div>
<div class="t" style="left:340px;top:261px;width:54.5px;text-align:right;letter-spacing:0.5px">0</div>
<div class="cb" style="left:418px;top:262px;width:13px;height:13px;background:#fff;box-shadow:none"></div>
<div class="t" style="left:453px;top:261px;width:54.5px;text-align:right;letter-spacing:0.5px">-1</div>
<div class="t" style="left:509px;top:261px;width:55.5px;text-align:right;letter-spacing:0.5px">1044</div>
<div class="t" style="left:566px;top:261px;width:54.5px;text-align:right;letter-spacing:0.5px">15</div>
<div class="t" style="left:622px;top:261px;width:55.5px;text-align:right;letter-spacing:0.5px">255</div>
<div class="t" style="left:679px;top:261px;width:54.5px;text-align:right;letter-spacing:0.5px">127</div>
<div style="left:0;top:292px;width:735px;height:1px;background:#A8A69C"></div>
<div class="t" style="left:0px;top:277px;width:55.5px;text-align:right;letter-spacing:0.5px">1046</div>
<div class="t" style="left:57px;top:277px;width:55.5px;text-align:right;letter-spacing:0.5px">3</div>
<div class="t" style="left:114px;top:277px;width:54.5px;text-align:right;letter-spacing:0.5px">1</div>
<div class="t" style="left:170px;top:277px;width:55.5px;text-align:right;letter-spacing:0.5px">0</div>
<div class="t" style="left:227px;top:277px;width:54.5px;text-align:right;letter-spacing:0.5px">-84</div>
<div class="t" style="left:283px;top:277px;width:55.5px;text-align:right;letter-spacing:0.5px">-9</div>
<div class="t" style="left:340px;top:277px;width:54.5px;text-align:right;letter-spacing:0.5px">0</div>
<div class="cb" style="left:418px;top:278px;width:13px;height:13px;background:#fff;box-shadow:none"></div>
<div class="t" style="left:453px;top:277px;width:54.5px;text-align:right;letter-spacing:0.5px">1047</div>
<div class="t" style="left:509px;top:277px;width:55.5px;text-align:right;letter-spacing:0.5px">-1</div>
<div class="t" style="left:566px;top:277px;width:54.5px;text-align:right;letter-spacing:0.5px">16</div>
<div class="t" style="left:622px;top:277px;width:55.5px;text-align:right;letter-spacing:0.5px">0</div>
<div class="t" style="left:679px;top:277px;width:54.5px;text-align:right;letter-spacing:0.5px">127</div>
<div style="left:56px;top:21px;width:1px;height:270px;background:#A8A69C"></div>
<div style="left:113px;top:21px;width:1px;height:270px;background:#A8A69C"></div>
<div style="left:169px;top:21px;width:1px;height:270px;background:#A8A69C"></div>
<div style="left:226px;top:21px;width:1px;height:270px;background:#A8A69C"></div>
<div style="left:282px;top:21px;width:1px;height:270px;background:#A8A69C"></div>
<div style="left:339px;top:21px;width:1px;height:270px;background:#A8A69C"></div>
<div style="left:395px;top:21px;width:1px;height:270px;background:#A8A69C"></div>
<div style="left:452px;top:21px;width:1px;height:270px;background:#A8A69C"></div>
<div style="left:508px;top:21px;width:1px;height:270px;background:#A8A69C"></div>
<div style="left:565px;top:21px;width:1px;height:270px;background:#A8A69C"></div>
<div style="left:621px;top:21px;width:1px;height:270px;background:#A8A69C"></div>
<div style="left:678px;top:21px;width:1px;height:270px;background:#A8A69C"></div>
<div style="left:734px;top:21px;width:1px;height:270px;background:#A8A69C"></div>
</div>
<div style="left:1156px;top:106px;width:16px;height:271px;background:#F7F7F5"></div>
<div style="left:1156px;top:107px;width:16px;height:17px;border:1px solid #DAD6C2;border-radius:3px;background:linear-gradient(#F6F8FF,#C8D4F6 40%,#A8B8E0)"></div>
<svg style="position:absolute;left:1156px;top:107px" width="16" height="17"><path d="M4 10.5L8 6.5L12 10.5" stroke="#46617F" stroke-width="2.2" fill="none"/></svg>
<div style="left:1156px;top:124px;width:16px;height:117px;border:1px solid #DAD6C2;border-radius:3px;background:linear-gradient(90deg,#F4F6FF,#C4D2F8 35%,#B4C4EE 60%,#A4B4D8)"></div>
<div style="left:1161px;top:178px;width:6px;height:1px;background:#EEF2FC"></div>
<div style="left:1161px;top:180px;width:6px;height:1px;background:#EEF2FC"></div>
<div style="left:1161px;top:182px;width:6px;height:1px;background:#EEF2FC"></div>
<div style="left:1161px;top:184px;width:6px;height:1px;background:#EEF2FC"></div>
<div style="left:1156px;top:360px;width:16px;height:17px;border:1px solid #DAD6C2;border-radius:3px;background:linear-gradient(#F6F8FF,#C8D4F6 40%,#A8B8E0)"></div>
<svg style="position:absolute;left:1156px;top:360px" width="16" height="17"><path d="M4 7L8 11L12 7" stroke="#46617F" stroke-width="2.2" fill="none"/></svg>
<div style="left:9px;top:424px;width:1166px;height:23px;border:1px solid #A7A496;box-shadow:1px 1px 0 #fff inset, 1px 1px 0 #fff"></div>
<div style="left:11px;top:426px;width:20px;height:20px;border:1px solid #1E3C76;border-radius:3px;background:linear-gradient(#FFFFFF,#E8EAF2 60%,#C9CCDD)"></div>
<svg style="position:absolute;left:11px;top:426px" width="20" height="20"><defs><linearGradient id="pg" x1="0" y1="0" x2="1" y2="1"><stop offset="0" stop-color="#C4DCF8"/><stop offset="1" stop-color="#FFFFFF"/></linearGradient></defs><path d="M4.5 2.5H13.5L17.5 6.5V17.5H4.5Z" fill="url(#pg)" stroke="#5A8AD6"/><path d="M13.5 2.5V6.5H17.5" fill="#F0F6FF" stroke="#5A8AD6" stroke-width="0.8"/><rect x="5" y="13.5" width="7" height="2" fill="#3CB4F0"/><path d="M9.5 11.5H13V8.8L18.3 13.3L13 17.8V15.1H9.5Z" fill="#68B848" stroke="#2E8A2A" stroke-width="0.9"/></svg>
<div style="left:36px;top:426px;width:20px;height:20px;border:1px solid #1E3C76;border-radius:3px;background:linear-gradient(#FFFFFF,#E8EAF2 60%,#C9CCDD)"></div>
<svg style="position:absolute;left:36px;top:426px" width="20" height="20"><defs><linearGradient id="pg" x1="0" y1="0" x2="1" y2="1"><stop offset="0" stop-color="#C4DCF8"/><stop offset="1" stop-color="#FFFFFF"/></linearGradient></defs><path d="M4.5 2.5H13.5L17.5 6.5V17.5H4.5Z" fill="url(#pg)" stroke="#5A8AD6"/><path d="M13.5 2.5V6.5H17.5" fill="#F0F6FF" stroke="#5A8AD6" stroke-width="0.8"/><rect x="5" y="13.5" width="7" height="2" fill="#3CB4F0"/><rect x="9.5" y="8.5" width="9" height="9.5" fill="#4C7CD0" stroke="#2C56A0"/><rect x="11" y="9" width="6" height="3.5" fill="#EEF4FF"/><rect x="11.5" y="15" width="5" height="2" fill="#B8E060"/></svg>
<div style="left:67px;top:426px;width:20px;height:20px;border:1px solid #1E3C76;border-radius:3px;background:linear-gradient(#FFFFFF,#E8EAF2 60%,#C9CCDD)"></div>
<svg style="position:absolute;left:67px;top:426px" width="20" height="20"><path d="M5 5.8H12A4 4 0 0 1 12 13.8H8.5" fill="none" stroke="#3FA040" stroke-width="3.6"/><path d="M5 5.8H12A4 4 0 0 1 12 13.8H8.5" fill="none" stroke="#8ED08A" stroke-width="1.4"/><path d="M3.6 13.8L8.8 9.6V18Z" fill="#4AAA48"/></svg>
<div style="left:92px;top:426px;width:20px;height:20px;border:1px solid #E0DED2;border-radius:3px;background:linear-gradient(#FBFBF8,#E8E6DC)"></div>
<svg style="position:absolute;left:92px;top:426px" width="20" height="20"><path d="M14.6 7.6H10A3.8 3.8 0 0 0 10 15.1H16.8" fill="none" stroke="#9C9C9C" stroke-width="3.7"/><path d="M18 7.3L14.2 3V11.6Z" fill="#9C9C9C"/></svg>
<div style="left:132px;top:426px;width:20px;height:20px;border:1px solid #1E3C76;border-radius:3px;background:linear-gradient(#FFFFFF,#E8EAF2 60%,#C9CCDD)"></div>
<svg style="position:absolute;left:132px;top:426px" width="20" height="20"><defs><linearGradient id="pg" x1="0" y1="0" x2="1" y2="1"><stop offset="0" stop-color="#C4DCF8"/><stop offset="1" stop-color="#FFFFFF"/></linearGradient></defs><path d="M3.5 2.5H9.5L12.5 5.5V13.5H3.5Z" fill="url(#pg)" stroke="#5A8AD6"/><path d="M9.5 2.5V5.5H12.5" fill="#F0F6FF" stroke="#5A8AD6" stroke-width="0.8"/><path d="M9.5 6.5H15.5L18.5 9.5V17.5H9.5Z" fill="url(#pg)" stroke="#5A8AD6"/><path d="M15.5 6.5V9.5H18.5" fill="#F0F6FF" stroke="#5A8AD6" stroke-width="0.8"/></svg>
<div style="left:157px;top:426px;width:20px;height:20px;border:1px solid #1E3C76;border-radius:3px;background:linear-gradient(#FFFFFF,#E8EAF2 60%,#C9CCDD)"></div>
<svg style="position:absolute;left:157px;top:426px" width="20" height="20"><rect x="3.5" y="3" width="11" height="13.5" rx="1.5" fill="#D89848" stroke="#A86A20"/><rect x="6.5" y="2" width="5" height="3" rx="1" fill="#F4E080" stroke="#B08030" stroke-width="0.6"/><rect x="9.5" y="8.5" width="8.5" height="9" fill="#F6F6F6" stroke="#8A8A8A"/><path d="M11 11H16.5M11 13H16.5M11 15H16.5" fill="none" stroke="#9A9A9A" stroke-width="1"/></svg>
<div style="left:182px;top:426px;width:20px;height:20px;border:1px solid #1E3C76;border-radius:3px;background:linear-gradient(#FFFFFF,#E8EAF2 60%,#C9CCDD)"></div>
<svg style="position:absolute;left:182px;top:426px" width="20" height="20"><path d="M11 2L11 11.5M16.5 3.5L11.5 11.5" stroke="#60A8E8" stroke-width="1.8"/><circle cx="8.2" cy="14.2" r="2.3" fill="none" stroke="#3C90E0" stroke-width="1.5"/><circle cx="13.6" cy="14.6" r="2.3" fill="none" stroke="#3C90E0" stroke-width="1.5"/></svg>
<div style="left:220px;top:426px;width:20px;height:20px;border:1px solid #1E3C76;border-radius:3px;background:linear-gradient(#FFFFFF,#E8EAF2 60%,#C9CCDD)"></div>
<svg style="position:absolute;left:220px;top:426px" width="20" height="20"><defs><linearGradient id="pg" x1="0" y1="0" x2="1" y2="1"><stop offset="0" stop-color="#C4DCF8"/><stop offset="1" stop-color="#FFFFFF"/></linearGradient></defs><path d="M4.5 2.5H14.5L18.5 6.5V17.5H4.5Z" fill="url(#pg)" stroke="#5A8AD6"/><path d="M14.5 2.5V6.5H18.5" fill="#F0F6FF" stroke="#5A8AD6" stroke-width="0.8"/><rect x="5" y="13.5" width="7" height="2" fill="#3CB4F0"/><circle cx="15.4" cy="14.5" r="3.8" fill="#48A848" stroke="#2A7A2A" stroke-width="0.8"/><path d="M15.4 12.3V16.7M13.2 14.5H17.6" stroke="#fff" stroke-width="1.6"/></svg>
<div style="left:245px;top:426px;width:20px;height:20px;border:1px solid #1E3C76;border-radius:3px;background:linear-gradient(#FFFFFF,#E8EAF2 60%,#C9CCDD)"></div>
<svg style="position:absolute;left:245px;top:426px" width="20" height="20"><defs><linearGradient id="pg" x1="0" y1="0" x2="1" y2="1"><stop offset="0" stop-color="#C4DCF8"/><stop offset="1" stop-color="#FFFFFF"/></linearGradient></defs><path d="M4.5 2.5H13.5L17.5 6.5V17.5H4.5Z" fill="url(#pg)" stroke="#5A8AD6"/><path d="M13.5 2.5V6.5H17.5" fill="#F0F6FF" stroke="#5A8AD6" stroke-width="0.8"/><rect x="5" y="13.5" width="9" height="2" fill="#3CB4F0"/><path d="M7.7 14.1L18.1 4.8" stroke="#C89020" stroke-width="4"/><path d="M7.7 14.1L18.1 4.8" stroke="#F8E060" stroke-width="2"/><path d="M6.6 16L8.4 12L10.2 14Z" fill="#8A5A20"/></svg>
<div style="left:283px;top:426px;width:20px;height:20px;border:1px solid #1E3C76;border-radius:3px;background:linear-gradient(#FFFFFF,#E8EAF2 60%,#C9CCDD)"></div>
<svg style="position:absolute;left:283px;top:426px" width="20" height="20"><text x="3.3" y="12.6" font-size="8" font-weight="bold" fill="#FFF0D8" stroke="#F08010" stroke-width="1.3" paint-order="stroke" textLength="15.4" lengthAdjust="spacingAndGlyphs" font-family="Liberation Sans">NEW</text></svg>
<div style="left:419px;top:426px;width:20px;height:20px;border:1px solid #1E3C76;border-radius:3px;background:linear-gradient(#FFFFFF,#E8EAF2 60%,#C9CCDD)"></div>
<svg style="position:absolute;left:419px;top:426px" width="20" height="20"><path d="M3 9.5H18.6M6.8 3.3L14.9 15.8M14.9 3.3L6.8 15.8" stroke="#F4A020" stroke-width="3" stroke-linecap="round"/><path d="M3 9.5H18.6M6.8 3.3L14.9 15.8M14.9 3.3L6.8 15.8" stroke="#FFC860" stroke-width="1"/></svg>
<div style="left:473px;top:426px;width:20px;height:20px;border:1px solid #1E3C76;border-radius:3px;background:linear-gradient(#FFFFFF,#E8EAF2 60%,#C9CCDD)"></div>
<svg style="position:absolute;left:473px;top:426px" width="20" height="20"><circle cx="11" cy="10" r="6.7" fill="#E85048" stroke="#C83830" stroke-width="0.8"/><circle cx="11" cy="10" r="5.2" fill="none" stroke="#F8A8A0" stroke-width="0.8"/><rect x="7.8" y="8.6" width="6.4" height="2.9" fill="#fff"/></svg>
<div style="left:498px;top:426px;width:20px;height:20px;border:1px solid #1E3C76;border-radius:3px;background:linear-gradient(#FFFFFF,#E8EAF2 60%,#C9CCDD)"></div>
<svg style="position:absolute;left:498px;top:426px" width="20" height="20"><circle cx="11" cy="10" r="6.7" fill="#58B858" stroke="#3A983A" stroke-width="0.8"/><circle cx="11" cy="10" r="5.2" fill="none" stroke="#B8E8B0" stroke-width="0.8"/><path d="M11 6.6V13.4M7.6 10H14.4" stroke="#fff" stroke-width="2.8"/></svg>
<div class="t" style="left:522px;top:428px;letter-spacing:0.3px">factor</div>
<div class="tf" style="left:569px;top:426px;width:46px;height:19px;line-height:16px">1.5</div>
<div class="t" style="left:16px;top:459px">DISPLAY/Animation/Scenario</div>
<svg style="position:absolute;left:16px;top:483px" width="150" height="150"><rect width="150" height="150" fill="#000"/>
<g fill="none" stroke-width="1" shape-rendering="crispEdges">
<polyline points="24.1,50.5 56.6,26.5" stroke="#E8E8E8"/>
<polyline points="56.6,26.5 105.5,24.1 136.4,46.9 137.7,75.9 101.4,75.4 86.8,66.4 83.5,36.6 105.5,25.4" stroke="#FF10FF"/>
<polyline points="105.5,25.0 137.2,47.5" stroke="#FF10FF"/>
<polyline points="137.7,46.9 137.7,75.9" stroke="#FF10FF" stroke-width="2"/>
<polyline points="112.3,48.2 115.6,59.6" stroke="#E8E8E8"/>
<polyline points="0,74.6 6.2,68.5 15.1,68.5 58.6,72.6 58.6,98.5 20.8,100.9 7,100.6 0,93.3" stroke="#FF10FF"/>
<polyline points="20.8,100.9 44.4,124.2 94.1,127.5" stroke="#FF10FF"/>
<polyline points="94.1,127.5 109.6,117.4" stroke="#E8E8E8"/>
<polyline points="94.1,117.7 138.4,116.4 144.6,97.7" stroke="#FF10FF"/>
<polyline points="94.9,97.7 150,97.7" stroke="#FF10FF"/>
<polyline points="94.1,117.7 73.3,96.5 90.5,77.5 150,76.2" stroke="#FF10FF"/>
</g>
<rect x="30" y="79" width="1.2" height="1.2" fill="#fff"/><rect x="56" y="84" width="1.2" height="1.2" fill="#fff"/>
</svg>
<div style="left:29px;top:650px;width:137px;height:4px;border-radius:2px;background:linear-gradient(#A5A293 0,#A5A293 1px,#FFFFFF 1px,#F4F2EA 4px)"></div>
<div style="left:29px;top:663px;width:1px;height:10px;background:#807D70"></div>
<div style="left:36px;top:663px;width:1px;height:10px;background:#807D70"></div>
<div style="left:43px;top:663px;width:1px;height:10px;background:#807D70"></div>
<div style="left:50px;top:663px;width:1px;height:10px;background:#807D70"></div>
<div style="left:57px;top:663px;width:1px;height:10px;background:#807D70"></div>
<div style="left:63px;top:663px;width:1px;height:10px;background:#807D70"></div>
<div style="left:70px;top:663px;width:1px;height:10px;background:#807D70"></div>
<div style="left:77px;top:663px;width:1px;height:10px;background:#807D70"></div>
<div style="left:84px;top:663px;width:1px;height:10px;background:#807D70"></div>
<div style="left:90px;top:663px;width:1px;height:10px;background:#807D70"></div>
<div style="left:97px;top:663px;width:1px;height:10px;background:#807D70"></div>
<div style="left:104px;top:663px;width:1px;height:10px;background:#807D70"></div>
<div style="left:111px;top:663px;width:1px;height:10px;background:#807D70"></div>
<div style="left:118px;top:663px;width:1px;height:10px;background:#807D70"></div>
<div style="left:124px;top:663px;width:1px;height:10px;background:#807D70"></div>
<div style="left:131px;top:663px;width:1px;height:10px;background:#807D70"></div>
<div style="left:138px;top:663px;width:1px;height:10px;background:#807D70"></div>
<div style="left:145px;top:663px;width:1px;height:10px;background:#807D70"></div>
<div style="left:151px;top:663px;width:1px;height:10px;background:#807D70"></div>
<div style="left:158px;top:663px;width:1px;height:10px;background:#807D70"></div>
<div style="left:165px;top:663px;width:1px;height:10px;background:#807D70"></div>
<svg style="position:absolute;left:92px;top:641px" width="11" height="22"><path d="M0.5 0.5H10.5V15L5.5 20.5L0.5 15Z" fill="#F2F1EC" stroke="#8FA2C4"/><rect x="1" y="1" width="9" height="3" fill="#22C022"/><path d="M1 15L5.5 19.5L10 15" stroke="#22C022" stroke-width="1.5" fill="none"/></svg>
<div class="t" style="left:20px;top:684px">Delay</div>
<div class="tf" style="left:65px;top:682px;width:30px;height:19px">80</div>
<div style="left:101px;top:682px;width:19px;height:19px;border:1px solid #1E3C76;border-radius:3px;background:linear-gradient(#FFFFFF,#E8EAF2 60%,#C9CCDD)"></div>
<svg style="position:absolute;left:101px;top:682px" width="19" height="19"><circle cx="9.5" cy="9.5" r="6" fill="#E4EAF6" stroke="#A0B0D0"/><path d="M8 6.5L12 9.5L8 12.5Z" fill="#3A6AC0"/></svg>
<div class="pane" style="left:184px;top:485px;width:291px;height:214px"></div>
<div style="left:184px;top:461px;width:100px;height:24px;border-left:1px solid #8DA3C6;border-right:1px solid #8DA3C6;background:#ECE9D8"></div>
<div style="left:184px;top:461px;width:100px;height:3px;background:linear-gradient(#E8A828,#F8BC3C 1px);clip-path:polygon(2px 0,calc(100% - 2px) 0,100% 2px,100% 100%,0 100%,0 2px)"></div>
<div class="t" style="left:184px;top:465px;width:100px;text-align:center;letter-spacing:0.2px">build animation</div>
<div class="pane" style="left:185px;top:512px;width:287px;height:184px"></div>
<div class="tab" style="left:187px;top:490px;width:60px;height:22px"></div>
<div class="t" style="left:187px;top:495px;width:60px;text-align:center;letter-spacing:0px">Rotation</div>
<div class="tab" style="left:248px;top:490px;width:62px;height:22px"></div>
<div class="t" style="left:248px;top:495px;width:62px;text-align:center;letter-spacing:0px">Morphing</div>
<div style="left:310px;top:488px;width:63px;height:24px;border-left:1px solid #8DA3C6;border-right:1px solid #8DA3C6;background:#ECE9D8"></div>
<div style="left:310px;top:488px;width:63px;height:3px;background:linear-gradient(#E8A828,#F8BC3C 1px);clip-path:polygon(2px 0,calc(100% - 2px) 0,100% 2px,100% 100%,0 100%,0 2px)"></div>
<div class="t" style="left:310px;top:492px;width:63px;text-align:center;letter-spacing:-0.2px">Scenario</div>
<div class="btn" style="left:198px;top:524px;width:237px;height:19px;text-align:center">seperate paths as scenario entries</div>
<div class="pane" style="left:483px;top:485px;width:281px;height:214px"></div>
<div class="tab" style="left:485px;top:463px;width:82px;height:22px"></div>
<div class="t" style="left:485px;top:468px;width:82px;text-align:center;letter-spacing:0px">Mode/Select</div>
<div style="left:566px;top:461px;width:70px;height:24px;border-left:1px solid #8DA3C6;border-right:1px solid #8DA3C6;background:#ECE9D8"></div>
<div style="left:566px;top:461px;width:70px;height:3px;background:linear-gradient(#E8A828,#F8BC3C 1px);clip-path:polygon(2px 0,calc(100% - 2px) 0,100% 2px,100% 100%,0 100%,0 2px)"></div>
<div class="t" style="left:566px;top:465px;width:70px;text-align:center;letter-spacing:0.2px">shortcuts</div>
<div class="btn" style="left:496px;top:497px;width:175px;height:19px;padding-left:13px">center vectorlist</div>
<div class="btn" style="left:496px;top:521px;width:175px;height:19px;padding-left:13px">connect where possible</div>
<div class="btn" style="left:496px;top:545px;width:175px;height:19px;padding-left:13px">order vectorlist</div>
<div class="btn" style="left:496px;top:569px;width:175px;height:19px;padding-left:13px">split where needed</div>
<div class="btn" style="left:496px;top:593px;width:175px;height:19px;padding-left:13px">fill gaps</div>
<div class="btn" style="left:496px;top:617px;width:175px;height:19px;padding-left:13px">remove dots</div>
<div class="btn" style="left:496px;top:641px;width:175px;height:19px;padding-left:13px">fit byte</div>
<div class="cb" style="left:676px;top:596px;width:13px;height:13px"></div>
<div class="t" style="left:693px;top:595px">line</div>
<div class="cb" style="left:676px;top:644px;width:13px;height:13px;border-color:#C8C8C0;background:#F4F4F0"></div>
<svg style="position:absolute;left:676px;top:644px" width="13" height="13"><path d="M3.2 5.6L5.5 8.8L9.8 3.4" stroke="#C0C0B8" stroke-width="2" fill="none"/></svg>
<div class="t" style="left:693px;top:643px;color:#ACA899">fractions</div>
<div class="pane" style="left:772px;top:485px;width:241px;height:214px"></div>
<div style="left:772px;top:461px;width:40px;height:24px;border-left:1px solid #8DA3C6;border-right:1px solid #8DA3C6;background:#ECE9D8"></div>
<div style="left:772px;top:461px;width:40px;height:3px;background:linear-gradient(#E8A828,#F8BC3C 1px);clip-path:polygon(2px 0,calc(100% - 2px) 0,100% 2px,100% 100%,0 100%,0 2px)"></div>
<div class="t" style="left:772px;top:465px;width:40px;text-align:center;letter-spacing:0px">Line</div>
<div class="tab" style="left:810px;top:463px;width:46px;height:22px"></div>
<div class="t" style="left:810px;top:468px;width:46px;text-align:center;letter-spacing:0px">Figure</div>
<div class="cb" style="left:787px;top:498px;width:13px;height:13px"></div>
<div class="t" style="left:804px;top:497px;letter-spacing:0.2px">has pattern byte</div>
<div class="tf" style="left:785px;top:523px;width:30px;height:19px">51</div>
<div class="t" style="left:827px;top:525px;letter-spacing:0.35px">pattern byte (dec)</div>
<div class="cb" style="left:787px;top:565px;width:13px;height:13px"></div>
<div class="t" style="left:804px;top:564px;letter-spacing:0.2px">has intensity</div>
<div class="tf" style="left:785px;top:586px;width:30px;height:19px">127</div>
<div class="t" style="left:827px;top:588px;letter-spacing:0.35px">intensity (0-127)</div>
<div class="btn" style="left:785px;top:668px;width:132px;height:19px;padding-left:33px;letter-spacing:0.27px">set to selected</div>
<svg style="position:absolute;left:800px;top:670px" width="14" height="14"><circle cx="7" cy="7" r="6.2" fill="#5CBF5C" stroke="#3A9A3A"/><circle cx="7" cy="7" r="4.6" fill="none" stroke="#E8F8E8" stroke-width="1"/><path d="M4.3 7.2L6.3 9.2L9.8 5.2" stroke="#fff" stroke-width="1.6" fill="none"/></svg>
<div style="left:6px;top:720px;width:1173px;height:157px;border:1px solid #A7A496"></div>
<div class="t" style="left:9px;top:713px;padding:0 2px 0 3px;background:#ECE9D8;color:#A0A0A0;letter-spacing:0.35px">vectorlists collection</div>
<div class="t" style="left:14px;top:729px">Count</div>
<div class="tf" style="left:51px;top:726px;width:30px;height:19px">6</div>
<div class="t" style="left:94px;top:729px">now</div>
<div class="tf" style="left:124px;top:726px;width:30px;height:19px"></div>
<div style="left:166px;top:726px;width:13px;height:13px;border-radius:50%;border:1px solid #1C3F7C;background:radial-gradient(circle at 40% 30%,#FFFFFF,#E0E0E0)"></div>
<div class="t" style="left:183px;top:725px">animation</div>
<div style="left:166px;top:746px;width:13px;height:13px;border-radius:50%;border:1px solid #1C3F7C;background:radial-gradient(circle,#21A121 0,#21A121 2.5px,#FFFFFF 3px,#E8E8E8)"></div>
<div class="t" style="left:183px;top:745px">scenario</div>
<div style="left:14px;top:753px;width:20px;height:20px;border:1px solid #1E3C76;border-radius:3px;background:linear-gradient(#FFFFFF,#E8EAF2 60%,#C9CCDD)"></div>
<svg style="position:absolute;left:14px;top:753px" width="20" height="20"><defs><linearGradient id="pg" x1="0" y1="0" x2="1" y2="1"><stop offset="0" stop-color="#C4DCF8"/><stop offset="1" stop-color="#FFFFFF"/></linearGradient></defs><path d="M4.5 2.5H13.5L17.5 6.5V17.5H4.5Z" fill="url(#pg)" stroke="#5A8AD6"/><path d="M13.5 2.5V6.5H17.5" fill="#F0F6FF" stroke="#5A8AD6" stroke-width="0.8"/><rect x="5" y="13.5" width="7" height="2" fill="#3CB4F0"/><path d="M9.5 11.5H13V8.8L18.3 13.3L13 17.8V15.1H9.5Z" fill="#68B848" stroke="#2E8A2A" stroke-width="0.9"/></svg>
<div style="left:44px;top:753px;width:20px;height:20px;border:1px solid #1E3C76;border-radius:3px;background:linear-gradient(#FFFFFF,#E8EAF2 60%,#C9CCDD)"></div>
<svg style="position:absolute;left:44px;top:753px" width="20" height="20"><defs><linearGradient id="pg" x1="0" y1="0" x2="1" y2="1"><stop offset="0" stop-color="#C4DCF8"/><stop offset="1" stop-color="#FFFFFF"/></linearGradient></defs><path d="M4.5 2.5H13.5L17.5 6.5V17.5H4.5Z" fill="url(#pg)" stroke="#5A8AD6"/><path d="M13.5 2.5V6.5H17.5" fill="#F0F6FF" stroke="#5A8AD6" stroke-width="0.8"/><rect x="5" y="13.5" width="7" height="2" fill="#3CB4F0"/><rect x="9.5" y="8.5" width="9" height="9.5" fill="#4C7CD0" stroke="#2C56A0"/><rect x="11" y="9" width="6" height="3.5" fill="#EEF4FF"/><rect x="11.5" y="15" width="5" height="2" fill="#B8E060"/></svg>
<div class="btn" style="left:244px;top:723px;width:110px;height:19px;padding-left:33px">add current</div>
<svg style="position:absolute;left:259px;top:725px" width="14" height="14"><circle cx="7" cy="7" r="6.2" fill="#5CBF5C" stroke="#3A9A3A"/><path d="M7 3.8V10.2M3.8 7H10.2" stroke="#fff" stroke-width="2"/></svg>
<div class="btn" style="left:364px;top:723px;width:110px;height:19px;padding-left:33px">add view</div>
<svg style="position:absolute;left:379px;top:725px" width="14" height="14"><circle cx="7" cy="7" r="6.2" fill="#5CBF5C" stroke="#3A9A3A"/><path d="M7 3.8V10.2M3.8 7H10.2" stroke="#fff" stroke-width="2"/></svg>
<div style="left:244px;top:753px;width:110px;height:19px;border:1px solid #D4D2C8;border-radius:3px;background:linear-gradient(#FBFBF8,#E8E6DC);padding-left:33px;line-height:16px;color:#A0A0A0">apply</div>
<svg style="position:absolute;left:259px;top:755px" width="14" height="14"><path d="M1 1H10V8L13 11L10 14H1Z" fill="#A0A0A0"/></svg>
<div class="btn" style="left:515px;top:723px;width:110px;height:19px;padding-left:42px">Reverse</div>
<svg style="position:absolute;left:540px;top:724px" width="14" height="15"><path d="M3 6A4.5 4.5 0 0 1 11 4.5" stroke="#3AA03A" stroke-width="2" fill="none"/><path d="M12.5 1.5V6.5H7.5Z" fill="#3AA03A"/><path d="M11 9A4.5 4.5 0 0 1 3 10.5" stroke="#3AA03A" stroke-width="2" fill="none"/><path d="M1.5 13.5V8.5H6.5Z" fill="#3AA03A"/></svg>
<div class="btn" style="left:634px;top:723px;width:110px;height:19px;padding-left:33px">delete</div>
<svg style="position:absolute;left:648px;top:724px" width="15" height="15"><circle cx="7.5" cy="7.5" r="6.8" fill="#E85040" stroke="#B83020"/><circle cx="7.5" cy="7.5" r="5" fill="none" stroke="#F8A090" stroke-width="1"/><rect x="6.5" y="3.5" width="2" height="5" fill="#fff"/><rect x="6.5" y="9.7" width="2" height="2" fill="#fff"/></svg>
<div class="btn" style="left:754px;top:723px;width:110px;height:19px;padding-left:33px">join</div>
<svg style="position:absolute;left:766px;top:723px" width="20" height="18"><path d="M4 9L10 3" stroke="#808080" stroke-width="1"/><circle cx="4" cy="9" r="1.6" fill="#fff" stroke="#606060"/><path d="M9 6H13V13H6V9" fill="#C8DCF8" stroke="#5C8CD8"/><circle cx="13" cy="13" r="3.8" fill="#4CAF50" stroke="#2E7D32" stroke-width="0.8"/><path d="M13 11V15M11 13H15" stroke="#fff" stroke-width="1.3"/></svg>
<div class="btn" style="left:514px;top:753px;width:40px;height:19px"></div>
<svg style="position:absolute;left:526px;top:757px" width="16" height="11"><path d="M1 5.5L6 1.5V4H15V7H6V9.5Z" fill="#5CC040" stroke="#3A8A2A" stroke-width="0.7"/></svg>
<div class="btn" style="left:584px;top:753px;width:40px;height:19px"></div>
<svg style="position:absolute;left:596px;top:757px" width="16" height="11"><path d="M15 5.5L10 1.5V4H1V7H10V9.5Z" fill="#5CC040" stroke="#3A8A2A" stroke-width="0.7"/></svg>
<div class="btn" style="left:634px;top:753px;width:110px;height:19px;padding-left:34px">clear</div>
<svg style="position:absolute;left:646px;top:756px" width="20" height="12"><text x="2.3" y="9.6" font-size="8" font-weight="bold" fill="#FFF0D8" stroke="#F08010" stroke-width="1.3" paint-order="stroke" textLength="15.4" lengthAdjust="spacingAndGlyphs" font-family="Liberation Sans">NEW</text></svg>
<div style="left:14px;top:783px;width:1161px;height:65px;border-top:1px solid #A09E90;border-left:1px solid #A09E90"></div>
<div style="left:15px;top:784px;width:1160px;height:64px;border:1px solid #000"></div>
<svg style="position:absolute;left:21px;top:790px" width="52" height="52"><rect width="52" height="52" fill="#000"/><g fill="none" stroke="#A8A8A8" stroke-width="1" shape-rendering="crispEdges"><polyline points="25.4,31.7 32,26.6 48.7,26.6 50.8,29.3 47.2,33.4 45,38.5 39.2,39.2 31.2,39.5 25.4,31.7"/><polyline points="31.9,33.4 47.9,33.4"/></g></svg>
<svg style="position:absolute;left:78px;top:790px" width="52" height="52"><rect width="52" height="52" fill="#000"/><g fill="none" stroke="#A8A8A8" stroke-width="1" shape-rendering="crispEdges"><polyline points="48.2,9 50.7,15.7"/></g></svg>
<svg style="position:absolute;left:135px;top:790px" width="52" height="52"><rect width="52" height="52" fill="#000"/><g fill="none" stroke="#A8A8A8" stroke-width="1" shape-rendering="crispEdges"><polyline points="1.2,38.2 12.4,49.4 23.3,50.1 34.9,50.1 42.9,45"/><rect x="5" y="36" width="1" height="1" fill="#3030FF" stroke="none"/></g></svg>
<svg style="position:absolute;left:192px;top:790px" width="52" height="52"><rect width="52" height="52" fill="#000"/><g fill="none" stroke="#A8A8A8" stroke-width="1" shape-rendering="crispEdges"><polyline points="1.5,29.1 5.8,24.4 13.1,24.7 21.8,25.4 21.8,33.4 6.5,33.7 1.5,29.1"/></g></svg>
<svg style="position:absolute;left:249px;top:790px" width="52" height="52"><rect width="52" height="52" fill="#000"/><g fill="none" stroke="#A8A8A8" stroke-width="1" shape-rendering="crispEdges"><polyline points="50.8,14.8 41.7,8 38,6.1 34.4,8 29.3,11.6 30.5,22.9 36.6,26.6 50.8,26.6"/><rect x="35" y="12" width="1" height="1" fill="#3030FF" stroke="none"/></g></svg>
<svg style="position:absolute;left:306px;top:790px" width="52" height="52"><rect width="52" height="52" fill="#000"/><g fill="none" stroke="#A8A8A8" stroke-width="1" shape-rendering="crispEdges"><polyline points="5.1,17 16.7,7 29,6.5 38.5,5.5 50.8,14.8"/></g></svg>
<div style="left:14px;top:848px;width:1162px;height:18px;background:#F9F9F7;border:1px solid #D8D6CA"></div>
<div style="left:16px;top:849px;width:15px;height:15px;background:linear-gradient(#FFFFFF,#E2E1DA);border-right:1px solid #E4E2D6"></div>
<svg style="position:absolute;left:16px;top:849px" width="15" height="15"><path d="M10.5 3L6 7.5L10.5 12" stroke="#BDBDBD" stroke-width="2.2" fill="none"/></svg>
<div style="left:1159px;top:849px;width:15px;height:15px;background:linear-gradient(#FFFFFF,#E2E1DA);border-left:1px solid #E4E2D6"></div>
<svg style="position:absolute;left:1159px;top:849px" width="15" height="15"><path d="M5 3L9.5 7.5L5 12" stroke="#BDBDBD" stroke-width="2.2" fill="none"/></svg>
</div></body></html>
